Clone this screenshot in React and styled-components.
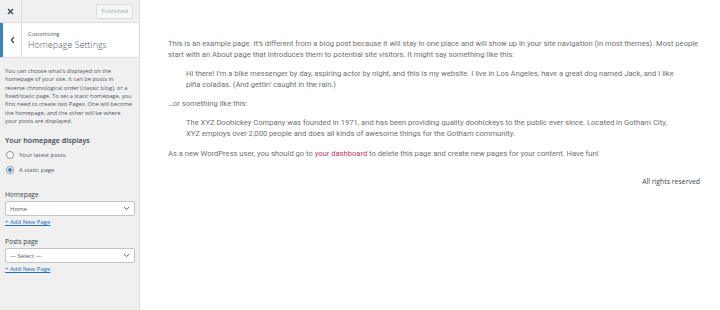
import React from "react";
import styled, { createGlobalStyle } from "styled-components";

const Global = createGlobalStyle`
  html, body { margin: 0; padding: 0; background: #fff; }
  #root { width: 720px; height: 310px; }
  * { box-sizing: border-box; }
`;

const Page = styled.div`
  display: flex;
  width: 720px;
  height: 310px;
  overflow: hidden;
`;

const Sidebar = styled.aside`
  width: 140px;
  flex: none;
  background: #f0f0f1;
  border-right: 1px solid #dcdcde;
  font-family: "Open Sans", "Noto Sans", sans-serif;
  color: #50575e;
  display: flex;
  flex-direction: column;
`;

const TopBar = styled.div`
  height: 23px;
  display: flex;
  align-items: center;
  border-bottom: 1px solid #dcdcde;
`;

const CloseBtn = styled.div`
  width: 22px;
  height: 100%;
  border-right: 1px solid #dcdcde;
  display: flex;
  align-items: center;
  justify-content: center;
  color: #3c434a;
`;

const Spacer = styled.div`
  flex: 1;
`;

const PublishedBtn = styled.div`
  margin-right: 6px;
  height: 15px;
  padding: 0 4px;
  border: 1px solid #dcdcde;
  border-radius: 2px;
  background: #f6f7f7;
  color: #a7aaad;
  font-size: 5.8px;
  display: flex;
  align-items: center;
`;

const Header = styled.div`
  display: flex;
  height: 35px;
  background: #fff;
  border-bottom: 1px solid #dcdcde;
`;

const BackBtn = styled.div`
  width: 22px;
  border-left: 3px solid #3582c4;
  border-right: 1px solid #dcdcde;
  display: flex;
  align-items: center;
  justify-content: center;
  color: #3c434a;
`;

const HeaderText = styled.div`
  padding: 7px 0 0 6px;
  display: flex;
  flex-direction: column;
`;

const Small = styled.div`
  font-size: 5.5px;
  line-height: 8px;
`;

const Title = styled.div`
  font-size: 9px;
  line-height: 13px;
  font-weight: 300;
  color: #50575e;
`;

const Content = styled.div`
  padding: 9px 5px 0 5px;
  display: flex;
  flex-direction: column;
`;

const Desc = styled.p`
  margin: 0;
  font-size: 5.75px;
  line-height: 8.35px;
`;

const SectionTitle = styled.div`
  margin-top: 10px;
  font-size: 7.2px;
  font-weight: 600;
  color: #3c434a;
  line-height: 10px;
`;

const RadioRow = styled.label`
  display: flex;
  align-items: center;
  gap: 5px;
  height: 15px;
  margin-top: ${(p) => p.$mt || 0}px;
  font-size: 6px;
`;

const Radio = styled.span`
  width: 8px;
  height: 8px;
  border-radius: 50%;
  border: 1px solid #8c8f94;
  background: #fff;
  display: flex;
  align-items: center;
  justify-content: center;
  margin-left: 1px;
  &::after {
    content: "";
    width: 4px;
    height: 4px;
    border-radius: 50%;
    background: ${(p) => (p.$checked ? "#3582c4" : "transparent")};
  }
`;

const FieldLabel = styled.div`
  margin-top: ${(p) => p.$mt}px;
  font-size: 6.6px;
  line-height: 9px;
  color: #3c434a;
`;

const Select = styled.div`
  margin-top: 2px;
  height: 15px;
  width: 130px;
  border: 1px solid #c3c4c7;
  border-radius: 2px;
  background: #fff;
  display: flex;
  align-items: center;
  justify-content: space-between;
  padding: 0 4px;
  font-size: 6px;
  color: #50575e;
`;

const AddLink = styled.a`
  margin-top: 2px;
  font-size: 6px;
  line-height: 8px;
  color: #2271b1;
  text-decoration: underline;
`;

const Main = styled.main`
  flex: 1;
  background: #fff;
  padding: 39px 20px 0 28px;
  font-family: Roboto, "Liberation Sans", sans-serif;
  color: #707070;
  font-size: 7.6px;
  line-height: 10.8px;
`;

const P = styled.p`
  margin: 0 0 ${(p) => p.$mb}px 0;
`;

const Quote = styled.blockquote`
  margin: 0 18px ${(p) => p.$mb}px 18px;
`;

const Link = styled.a`
  color: #bd3763;
  text-decoration: none;
`;

const Footer = styled.div`
  margin-top: 18px;
  text-align: right;
  font-family: "Open Sans", "Noto Sans", sans-serif;
  font-size: 6.9px;
  color: #3c434a;
`;

const Chevron = () => (
  <svg width="7" height="5" viewBox="0 0 7 5">
    <path d="M1 1.2 L3.5 3.6 L6 1.2" fill="none" stroke="#50575e" strokeWidth="1" />
  </svg>
);

export default function App() {
  return (
    <Page>
      <Global />
      <Sidebar>
        <TopBar>
          <CloseBtn>
            <svg width="7" height="7" viewBox="0 0 7 7">
              <path d="M1 1 L6 6 M6 1 L1 6" stroke="#3c434a" strokeWidth="1.3" />
            </svg>
          </CloseBtn>
          <Spacer />
          <PublishedBtn>Published</PublishedBtn>
        </TopBar>
        <Header>
          <BackBtn>
            <svg width="5" height="8" viewBox="0 0 5 8">
              <path d="M4 1 L1.3 4 L4 7" fill="none" stroke="#3c434a" strokeWidth="1.2" />
            </svg>
          </BackBtn>
          <HeaderText>
            <Small>Customizing</Small>
            <Title>Homepage Settings</Title>
          </HeaderText>
        </Header>
        <Content>
          <Desc>
            You can choose what’s displayed on the homepage of your site. It can be posts in
            reverse chronological order (classic blog), or a fixed/static page. To set a static
            homepage, you first need to create two Pages. One will become the homepage, and the
            other will be where your posts are displayed.
          </Desc>
          <SectionTitle>Your homepage displays</SectionTitle>
          <RadioRow $mt={2}>
            <Radio />
            Your latest posts
          </RadioRow>
          <RadioRow>
            <Radio $checked />
            A static page
          </RadioRow>
          <FieldLabel $mt={13}>Homepage</FieldLabel>
          <Select>
            Home
            <Chevron />
          </Select>
          <AddLink>+ Add New Page</AddLink>
          <FieldLabel $mt={11}>Posts page</FieldLabel>
          <Select>
            — Select —
            <Chevron />
          </Select>
          <AddLink>+ Add New Page</AddLink>
        </Content>
      </Sidebar>
      <Main>
        <P $mb={8.5}>
          This is an example page. It’s different from a blog post because it will stay in one
          place and will show up in your site navigation (in most themes). Most people start with
          an About page that introduces them to potential site visitors. It might say something
          like this:
        </P>
        <Quote $mb={8.5}>
          Hi there! I’m a bike messenger by day, aspiring actor by night, and this is my website.
          I live in Los Angeles, have a great dog named Jack, and I like piña coladas. (And
          gettin’ caught in the rain.)
        </Quote>
        <P $mb={8.5}>…or something like this:</P>
        <Quote $mb={8.5}>
          The XYZ Doohickey Company was founded in 1971, and has been providing quality
          doohickeys to the public ever since. Located in Gotham City, XYZ employs over 2,000
          people and does all kinds of awesome things for the Gotham community.
        </Quote>
        <P $mb={0}>
          As a new WordPress user, you should go to <Link>your dashboard</Link> to delete this
          page and create new pages for your content. Have fun!
        </P>
        <Footer>All rights reserved</Footer>
      </Main>
    </Page>
  );
}
